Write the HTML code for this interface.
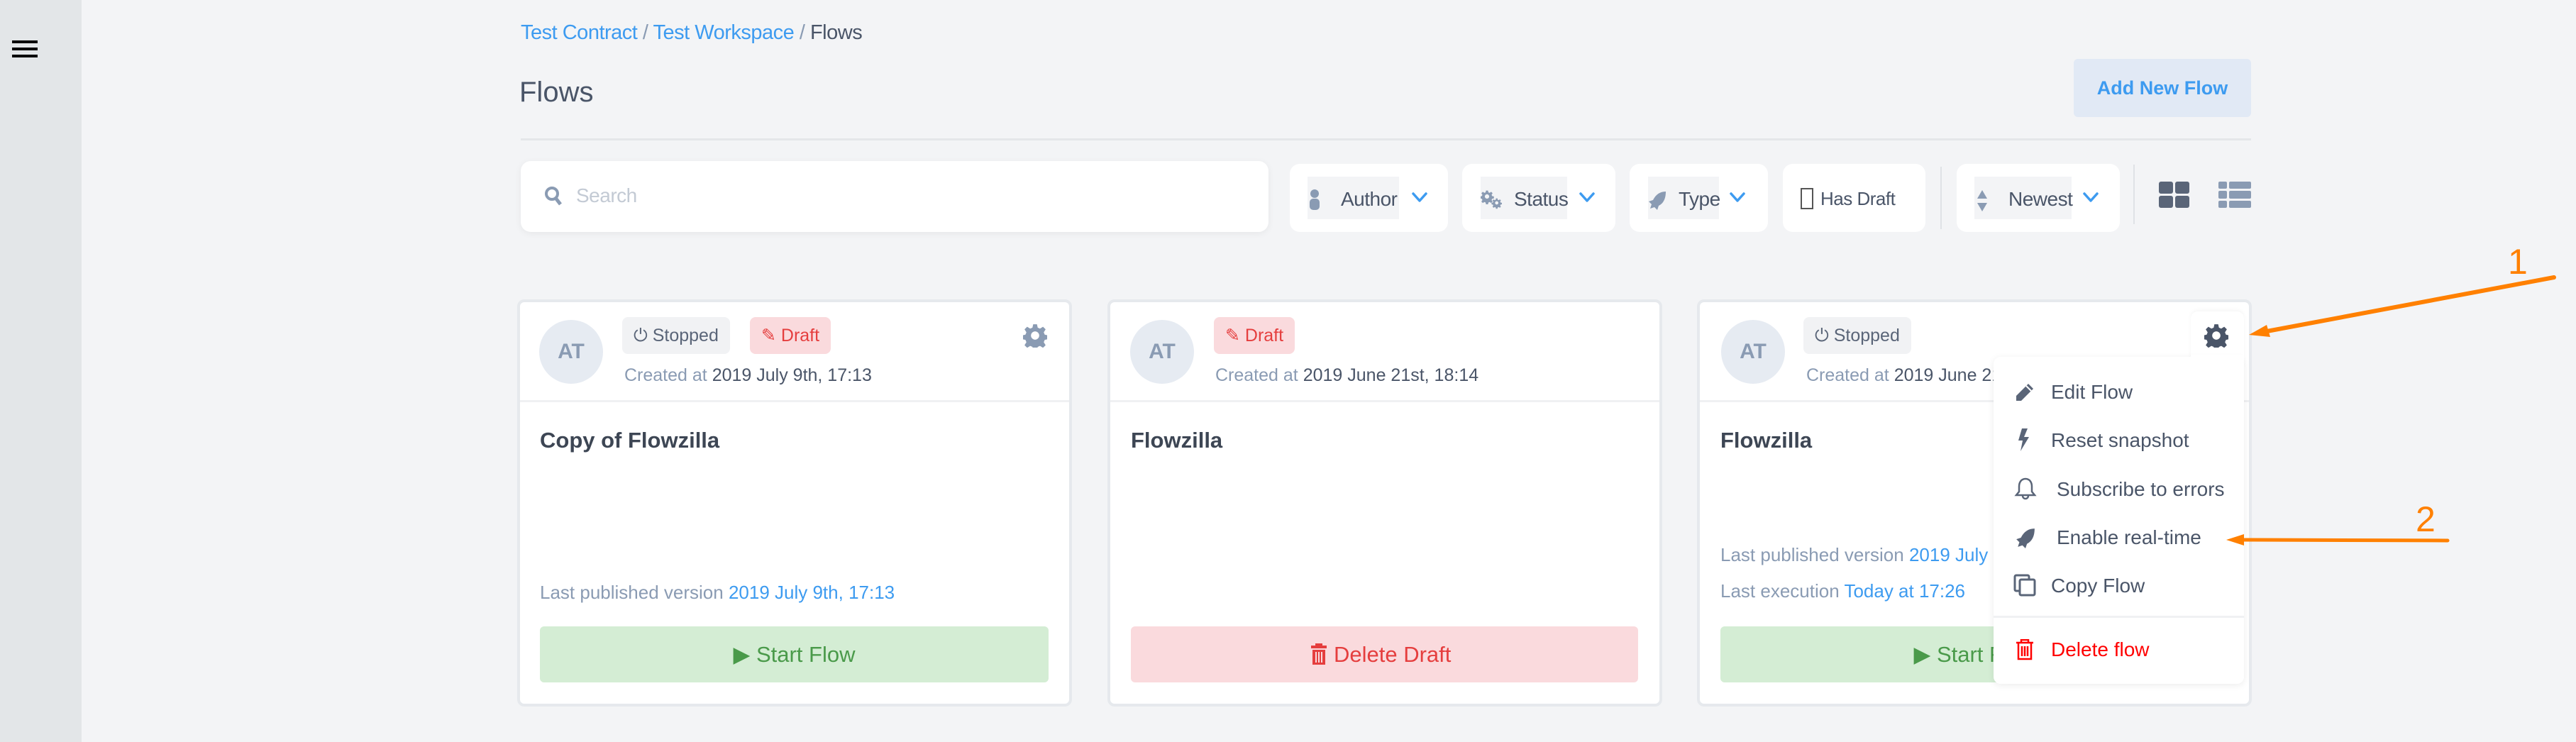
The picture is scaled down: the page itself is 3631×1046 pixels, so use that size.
<!DOCTYPE html>
<html><head><meta charset="utf-8"><style>
*{box-sizing:border-box;margin:0;padding:0}
body{width:3631px;height:1046px;background:#f3f4f6;font-family:"Liberation Sans",sans-serif;color:#4a5568;position:relative;overflow:hidden}
.a{position:absolute}
.sb{left:0;top:0;width:115px;height:1046px;background:#e3e6e8}
.hb{left:17px;width:36px;height:4px;background:#000}
.box{background:#fff;border-radius:14px}
.card{background:#fff;border:4px solid #e6e9ed;border-radius:10px;width:782px;height:574px;top:422px}
.badge{border-radius:8px;font-size:25px;line-height:52px;height:52px;padding:0 16px}
.lbl{font-size:28px;letter-spacing:-0.5px;white-space:nowrap}
.gray{color:#8a9bb3}
.blue{color:#3d9bf0}
.mi{left:2891px;font-size:28px;color:#4a5568;white-space:nowrap;line-height:34px}
</style></head><body>
<svg width="0" height="0" style="position:absolute"><defs>
<g id="gear"><path d="M16 1h0M13.5 1h5l1 4.5 3 1.3 4-2.5 3.5 3.5-2.5 4 1.3 3 4.5 1v5l-4.5 1-1.3 3 2.5 4-3.5 3.5-4-2.5-3 1.3-1 4.5h-5l-1-4.5-3-1.3-4 2.5-3.5-3.5 2.5-4-1.3-3-4.5-1v-5l4.5-1 1.3-3-2.5-4 3.5-3.5 4 2.5 3-1.3z M16 10.5a5.5 5.5 0 1 0 0.01 0z" fill-rule="evenodd"/></g>
<path id="chev" d="M2 3l9 10 9-10" fill="none" stroke-width="3.5" stroke-linecap="round" stroke-linejoin="round"/>
</defs></svg>
<div class="a sb"></div>
<div class="a hb" style="top:57px"></div><div class="a hb" style="top:67px"></div><div class="a hb" style="top:77px"></div>

<div class="a lbl" style="left:734px;top:30px;font-size:29px"><span class="blue">Test Contract</span> <span class="gray">/</span> <span class="blue">Test Workspace</span> <span class="gray">/</span> Flows</div>
<div class="a" style="left:732px;top:108px;font-size:40px;color:#4a5568">Flows</div>
<div class="a" style="left:2923px;top:83px;width:250px;height:82px;background:#e1e9f5;border-radius:6px;color:#3d9bf0;font-size:27px;font-weight:bold;line-height:82px;text-align:center">Add New Flow</div>
<div class="a" style="left:734px;top:195px;width:2439px;height:3px;background:#e4e6e9"></div>

<div class="a box" style="left:734px;top:227px;width:1054px;height:100px;box-shadow:0 2px 10px rgba(0,0,0,.06)"></div>
<svg class="a" style="left:767px;top:262px" width="26" height="30" viewBox="0 0 26 30"><circle cx="11" cy="11" r="8" fill="none" stroke="#8a9bb3" stroke-width="4"/><path d="M16 17l7 9" stroke="#8a9bb3" stroke-width="5"/></svg>
<div class="a lbl" style="left:812px;top:260px;color:#c3cad4">Search</div>

<div class="a box" style="left:1818px;top:231px;width:223px;height:96px"></div>
<div class="a" style="left:1843px;top:249px;width:129px;height:60px;background:#f3f4f6"></div>
<svg class="a" style="left:1845px;top:266px" width="16" height="30"><circle cx="8" cy="7" r="6" fill="#8a9bb3"/><rect x="1" y="14" width="14" height="16" rx="5" fill="#8a9bb3"/></svg>
<div class="a lbl" style="left:1890px;top:265px">Author</div>
<svg class="a" style="left:1990px;top:270px" width="22" height="16"><use href="#chev" stroke="#3d9bf0"/></svg>

<div class="a box" style="left:2061px;top:231px;width:216px;height:96px"></div>
<div class="a" style="left:2087px;top:249px;width:122px;height:60px;background:#f3f4f6"></div>
<svg class="a" style="left:2087px;top:268px" width="30" height="30" viewBox="0 0 32 32"><g transform="scale(.6)" fill="#8a9bb3"><use href="#gear"/></g><g transform="translate(17 12) scale(.45)" fill="#8a9bb3"><use href="#gear"/></g></svg>
<div class="a lbl" style="left:2134px;top:265px">Status</div>
<svg class="a" style="left:2226px;top:270px" width="22" height="16"><use href="#chev" stroke="#3d9bf0"/></svg>

<div class="a box" style="left:2297px;top:231px;width:195px;height:96px"></div>
<div class="a" style="left:2323px;top:249px;width:100px;height:60px;background:#f3f4f6"></div>
<svg class="a" style="left:2322px;top:268px" width="28" height="28" viewBox="0 0 28 28"><path d="M26 2C18 2 12 6 8 14L2 16 6 20 4 26 10 24 14 28 16 22C24 18 26 10 26 2Z" fill="#8a9bb3"/></svg>
<div class="a lbl" style="left:2366px;top:265px">Type</div>
<svg class="a" style="left:2438px;top:270px" width="22" height="16"><use href="#chev" stroke="#3d9bf0"/></svg>

<div class="a box" style="left:2513px;top:231px;width:201px;height:96px"></div>
<div class="a" style="left:2538px;top:265px;width:18px;height:30px;border:2px solid #555"></div>
<div class="a lbl" style="left:2566px;top:265px;color:#4a5568;font-size:26px">Has Draft</div>
<div class="a" style="left:2735px;top:235px;width:2px;height:88px;background:#dfe2e6"></div>

<div class="a box" style="left:2758px;top:231px;width:230px;height:96px"></div>
<div class="a" style="left:2783px;top:249px;width:137px;height:60px;background:#f3f4f6"></div>
<svg class="a" style="left:2787px;top:268px" width="14" height="30"><path d="M7 0L14 12H0Z M0 18H14L7 30Z" fill="#8a9bb3"/></svg>
<div class="a lbl" style="left:2831px;top:265px">Newest</div>
<svg class="a" style="left:2936px;top:270px" width="22" height="16"><use href="#chev" stroke="#3d9bf0"/></svg>
<div class="a" style="left:3007px;top:232px;width:2px;height:84px;background:#dfe2e6"></div>

<svg class="a" style="left:3043px;top:256px" width="44" height="37"><rect x="0" y="0" width="20" height="17" rx="3" fill="#5a6578"/><rect x="23" y="0" width="20" height="17" rx="3" fill="#5a6578"/><rect x="0" y="20" width="20" height="17" rx="3" fill="#5a6578"/><rect x="23" y="20" width="20" height="17" rx="3" fill="#5a6578"/></svg>
<svg class="a" style="left:3127px;top:256px" width="46" height="37"><rect x="0" y="0" width="12" height="10" rx="2" fill="#8a9bb3"/><rect x="15" y="0" width="31" height="10" rx="2" fill="#8a9bb3"/><rect x="0" y="13" width="12" height="11" rx="2" fill="#8a9bb3"/><rect x="15" y="13" width="31" height="11" rx="2" fill="#8a9bb3"/><rect x="0" y="27" width="12" height="10" rx="2" fill="#8a9bb3"/><rect x="15" y="27" width="31" height="10" rx="2" fill="#8a9bb3"/></svg>

<!-- card 1 -->
<div class="a card" style="left:729px"></div>
<div class="a" style="left:733px;top:564px;width:774px;height:3px;background:#f0f1f3"></div>
<div class="a" style="left:760px;top:451px;width:90px;height:90px;border-radius:50%;background:#e6ebf2;color:#8a9bb3;font-size:30px;font-weight:bold;line-height:90px;text-align:center">AT</div>
<div class="a badge" style="left:877px;top:447px;background:#f1f2f4;color:#5a6578">⏻ Stopped</div>
<div class="a badge" style="left:1057px;top:447px;background:#fadadd;color:#e53e3e">✎ Draft</div>
<div class="a" style="left:880px;top:515px;font-size:25px;white-space:nowrap"><span class="gray">Created at</span> 2019 July 9th, 17:13</div>
<svg class="a" style="left:1442px;top:456px" width="34" height="34" viewBox="0 0 32 32" fill="#8a9bb3"><use href="#gear"/></svg>
<div class="a" style="left:761px;top:603px;font-size:31px;font-weight:bold;color:#3d4654">Copy of Flowzilla</div>
<div class="a" style="left:761px;top:820px;font-size:26px;white-space:nowrap"><span class="gray">Last published version</span> <span class="blue">2019 July 9th, 17:13</span></div>
<div class="a" style="left:761px;top:883px;width:717px;height:79px;background:#d4edd4;border-radius:6px;color:#4a9a4a;font-size:31px;line-height:79px;text-align:center">▶ Start Flow</div>

<!-- card 2 -->
<div class="a card" style="left:1561px"></div>
<div class="a" style="left:1565px;top:564px;width:774px;height:3px;background:#f0f1f3"></div>
<div class="a" style="left:1593px;top:451px;width:90px;height:90px;border-radius:50%;background:#e6ebf2;color:#8a9bb3;font-size:30px;font-weight:bold;line-height:90px;text-align:center">AT</div>
<div class="a badge" style="left:1711px;top:447px;background:#fadadd;color:#e53e3e">✎ Draft</div>
<div class="a" style="left:1713px;top:515px;font-size:25px;white-space:nowrap"><span class="gray">Created at</span> 2019 June 21st, 18:14</div>
<div class="a" style="left:1594px;top:603px;font-size:31px;font-weight:bold;color:#3d4654">Flowzilla</div>
<div class="a" style="left:1594px;top:883px;width:715px;height:79px;background:#fadadd;border-radius:6px"></div>
<svg class="a" style="left:1848px;top:907px" width="22" height="30"><path d="M6 3V0h10v3H22v4H0V3z M2 9h18v21H2z" fill="#e53e3e"/><path d="M7 12v15M11 12v15M15 12v15" stroke="#fadadd" stroke-width="2"/></svg>
<div class="a" style="left:1880px;top:883px;color:#e53e3e;font-size:31px;line-height:79px">Delete Draft</div>

<!-- card 3 -->
<div class="a card" style="left:2392px"></div>
<div class="a" style="left:2396px;top:564px;width:774px;height:3px;background:#f0f1f3"></div>
<div class="a" style="left:2426px;top:451px;width:90px;height:90px;border-radius:50%;background:#e6ebf2;color:#8a9bb3;font-size:30px;font-weight:bold;line-height:90px;text-align:center">AT</div>
<div class="a badge" style="left:2542px;top:447px;background:#f1f2f4;color:#5a6578">⏻ Stopped</div>
<div class="a" style="left:2546px;top:515px;font-size:25px;white-space:nowrap"><span class="gray">Created at</span> 2019 June 21st, 18:14</div>
<div class="a" style="left:2425px;top:603px;font-size:31px;font-weight:bold;color:#3d4654">Flowzilla</div>
<div class="a" style="left:2425px;top:767px;font-size:26px;white-space:nowrap"><span class="gray">Last published version</span> <span class="blue">2019 July 9th, 17:13</span></div>
<div class="a" style="left:2425px;top:818px;font-size:26px;white-space:nowrap"><span class="gray">Last execution</span> <span class="blue">Today at 17:26</span></div>
<div class="a" style="left:2425px;top:883px;width:717px;height:79px;background:#d4edd4;border-radius:6px;color:#4a9a4a;font-size:31px;line-height:79px;text-align:center">▶ Start Flow</div>

<!-- gear + dropdown -->
<div class="a" style="left:3088px;top:439px;width:75px;height:80px;background:#fff;border-radius:10px 10px 0 0;box-shadow:0 -2px 6px rgba(0,0,0,.04)"></div>
<svg class="a" style="left:3107px;top:456px" width="34" height="34" viewBox="0 0 32 32" fill="#4a5568"><use href="#gear"/></svg>
<div class="a" style="left:2810px;top:503px;width:353px;height:461px;background:#fff;border-radius:10px;box-shadow:0 2px 10px rgba(0,0,0,.08)"></div>
<div class="a" style="left:3088px;top:500px;width:75px;height:10px;background:#fff"></div>
<svg class="a" style="left:2839px;top:538px" width="30" height="30" viewBox="0 0 30 30"><path d="M20 3l7 7L10 27H3v-7z" fill="#5a6578"/><path d="M17 6l7 7" stroke="#fff" stroke-width="2"/></svg>
<div class="a mi" style="top:536px">Edit Flow</div>
<svg class="a" style="left:2843px;top:604px" width="18" height="32"><path d="M7 0h8L10 12h7L5 32l3-15H2z" fill="#5a6578"/></svg>
<div class="a mi" style="top:604px">Reset snapshot</div>
<svg class="a" style="left:2839px;top:673px" width="32" height="32" viewBox="0 0 32 32"><path d="M16 2C10 2 7 7 7 13v7l-4 5h26l-4-5v-7C25 7 22 2 16 2Z M12 26a4 4 0 0 0 8 0" fill="none" stroke="#5a6578" stroke-width="2.5"/></svg>
<div class="a mi" style="top:673px;left:2899px">Subscribe to errors</div>
<svg class="a" style="left:2840px;top:743px" width="30" height="30" viewBox="0 0 28 28"><path d="M26 2C18 2 12 6 8 14L2 16 6 20 4 26 10 24 14 28 16 22C24 18 26 10 26 2Z" fill="#5a6578"/></svg>
<div class="a mi" style="top:741px;left:2899px">Enable real-time</div>
<svg class="a" style="left:2838px;top:809px" width="32" height="32"><rect x="2" y="2" width="20" height="22" rx="2" fill="none" stroke="#5a6578" stroke-width="3"/><rect x="9" y="8" width="21" height="22" rx="2" fill="#fff" stroke="#5a6578" stroke-width="3"/></svg>
<div class="a mi" style="top:809px">Copy Flow</div>
<div class="a" style="left:2810px;top:868px;width:353px;height:3px;background:#f0f1f3"></div>
<svg class="a" style="left:2841px;top:901px" width="26" height="30"><path d="M8 4V1h10v3M1 5h24M4 5v23h18V5M9 10v14M13 10v14M17 10v14" fill="none" stroke="#f00" stroke-width="2.5"/></svg>
<div class="a mi" style="top:899px;color:#f00">Delete flow</div>

<!-- annotations -->
<svg class="a" style="left:0;top:0" width="3631" height="1046">
<line x1="3600" y1="391" x2="3190" y2="468" stroke="#ff8000" stroke-width="6" stroke-linecap="round"/>
<path d="M3170 472L3195 458L3200 475Z" fill="#ff8000"/>
<line x1="3450" y1="762" x2="3160" y2="761" stroke="#ff8000" stroke-width="5" stroke-linecap="round"/>
<path d="M3138 761L3163 753L3163 769Z" fill="#ff8000"/>
</svg>
<div class="a" style="left:3535px;top:340px;font-size:50px;color:#ff8000">1</div>
<div class="a" style="left:3405px;top:703px;font-size:50px;color:#ff8000">2</div>
</body></html>
